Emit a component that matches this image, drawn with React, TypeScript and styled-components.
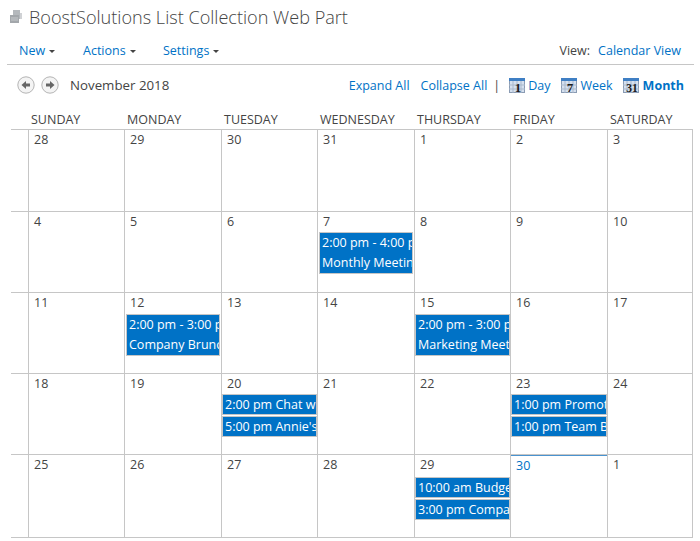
import React from "react";
import styled, { createGlobalStyle } from "styled-components";

const Global = createGlobalStyle`
  html, body { margin: 0; padding: 0; background: #fff; }
  body { font-family: "Open Sans", "Noto Sans", sans-serif; color: #444; }
`;

const Page = styled.div`
  width: 700px;
  height: 541px;
  overflow: hidden;
  display: flex;
  flex-direction: column;
`;

const TitleBar = styled.div`
  height: 35px;
  box-sizing: border-box;
  padding: 0 0 2px 8px;
  display: flex;
  align-items: center;
  gap: 5px;
`;

const Title = styled.h1`
  margin: 0;
  font-size: 18.1px;
  font-weight: 300;
  color: #444;
  white-space: nowrap;
`;

const Toolbar = styled.div`
  margin: 0 6px 0 7px;
  height: 30px;
  box-sizing: border-box;
  border-bottom: 1px solid #c6c6c6;
  padding: 1px 13px 0 12px;
  display: flex;
  align-items: center;
  font-size: 12.5px;
`;

const Menu = styled.a<{ $width: number }>`
  width: ${(p) => p.$width}px;
  display: flex;
  align-items: center;
  gap: 4px;
  color: #0072c6;
`;

const Caret = styled.span`
  width: 0;
  height: 0;
  margin-top: 2px;
  border-left: 3px solid transparent;
  border-right: 3px solid transparent;
  border-top: 3px solid #444;
`;

const ViewLabel = styled.span`
  margin-left: auto;
  margin-right: 8px;
`;

const Link = styled.a<{ $bold?: boolean; $gap?: number }>`
  color: #0072c6;
  white-space: nowrap;
  font-weight: ${(p) => (p.$bold ? 700 : 400)};
  margin-left: ${(p) => p.$gap ?? 0}px;
`;

const NavRow = styled.div`
  height: 40px;
  padding: 0 16px 0 17px;
  display: flex;
  align-items: center;
  font-size: 12.5px;
`;

const RoundButton = styled.span`
  width: 18px;
  height: 18px;
  margin-right: 6px;
  display: flex;
  align-items: center;
  justify-content: center;
`;

const Month = styled.span`
  margin-left: 5px;
  font-size: 13.3px;
  color: #444;
`;

const ViewLinks = styled.div`
  margin-left: auto;
  display: flex;
  align-items: center;
`;

const Sep = styled.span`
  margin: 0 9px 0 6px;
  color: #444;
`;

const ScopeItem = styled.div<{ $gap: number; $space: number }>`
  display: flex;
  align-items: center;
  gap: ${(p) => p.$gap}px;
  margin-left: ${(p) => p.$space}px;
`;

const Calendar = styled.div`
  margin-left: 11px;
  width: 682px;
  display: grid;
  grid-template-columns: 17px 96px 97px 96px 97px 96px 97px 86px;
`;

const HeadCell = styled.div`
  height: 25px;
  box-sizing: border-box;
  padding: 6px 0 0 3px;
  font-size: 12.5px;
  color: #444;
  white-space: nowrap;
  border-bottom: 1px solid #c6c6c6;
`;

const Gutter = styled.div`
  border-bottom: 1px solid #c6c6c6;
`;

const Cell = styled.div<{ $height: number; $last?: boolean }>`
  height: ${(p) => p.$height}px;
  box-sizing: border-box;
  min-width: 0;
  border-left: 1px solid #c6c6c6;
  border-right: ${(p) => (p.$last ? "1px solid #c6c6c6" : "none")};
  border-bottom: 1px solid #c6c6c6;
  display: flex;
  flex-direction: column;
`;

const DayNumber = styled.div<{ $today?: boolean; $height: number }>`
  height: ${(p) => p.$height}px;
  box-sizing: border-box;
  padding: 1px 0 0 5px;
  font-size: 12.5px;
  color: ${(p) => (p.$today ? "#0072c6" : "#444")};
  border-top: ${(p) => (p.$today ? "1px solid #4a93cf" : "none")};
`;

const EventList = styled.div`
  display: flex;
  flex-direction: column;
  gap: 1px;
`;

const EventBox = styled.div<{ $inset?: boolean }>`
  box-sizing: border-box;
  margin: 0 ${(p) => (p.$inset ? 1 : 0)}px;
  border: 1px solid #c6c6c6;
  background: #0072c6;
  color: #fff;
  font-size: 12.5px;
  padding-left: 2px;
  white-space: nowrap;
  overflow: hidden;
`;

const EventLine = styled.div<{ $height: number }>`
  height: ${(p) => p.$height}px;
  line-height: ${(p) => p.$height}px;
`;

const ArrowButton = ({ left }: { left?: boolean }) => (
  <RoundButton>
    <svg width="18" height="18" viewBox="0 0 18 18">
      <circle cx="9" cy="9" r="8.2" fill="#f4f4f4" stroke="#b4b4b4" />
      <path
        d={left ? "M4.5 9 9 5v2.6h4v2.8H9V13z" : "M13.5 9 9 5v2.6H5v2.8h4V13z"}
        fill="#666"
      />
    </svg>
  </RoundButton>
);

const CalIcon = ({ label }: { label: string }) => (
  <svg width="16" height="15" viewBox="0 0 16 15">
    <rect x="0.5" y="0.5" width="15" height="14" fill="#d5e0ef" stroke="#8a9bb3" />
    <rect x="0" y="0" width="16" height="3" fill="#3f7fc4" />
    <path d="M0 7h16M0 11h16M4 3v12M8 3v12M12 3v12" stroke="#a9b8cc" strokeWidth="1" />
    <text
      x="9"
      y="14"
      textAnchor="middle"
      fontFamily="Liberation Serif, serif"
      fontWeight="700"
      fontSize={label.length > 1 ? 11.5 : 13}
      fill="#1c1c1c"
    >
      {label}
    </text>
  </svg>
);

const TitleIcon = () => (
  <svg width="16" height="16" viewBox="0 0 16 16">
    <rect x="5" y="1" width="7" height="9" fill="#b4b8bc" />
    <rect x="2" y="6" width="9" height="8" fill="#a3a7ab" />
    <rect x="12" y="4" width="2" height="6" fill="#d0d2d5" />
    <path d="M3 9h7M3 11h7" stroke="#c6c9cc" />
  </svg>
);

const weekDays = ["SUNDAY", "MONDAY", "TUESDAY", "WEDNESDAY", "THURSDAY", "FRIDAY", "SATURDAY"];

type Day = { n: number; today?: boolean; flush?: boolean; events?: string[][] };

const weeks: { height: number; numberHeight: number; days: Day[] }[] = [
  {
    height: 82,
    numberHeight: 21,
    days: [{ n: 28 }, { n: 29 }, { n: 30 }, { n: 31 }, { n: 1 }, { n: 2 }, { n: 3 }],
  },
  {
    height: 81,
    numberHeight: 20,
    days: [
      { n: 4 },
      { n: 5 },
      { n: 6 },
      { n: 7, events: [["2:00 pm - 4:00 pm", "Monthly Meeting"]] },
      { n: 8 },
      { n: 9 },
      { n: 10 },
    ],
  },
  {
    height: 81,
    numberHeight: 21,
    days: [
      { n: 11 },
      { n: 12, events: [["2:00 pm - 3:00 pm", "Company Brunch"]] },
      { n: 13 },
      { n: 14 },
      { n: 15, flush: true, events: [["2:00 pm - 3:00 pm", "Marketing Meeting"]] },
      { n: 16 },
      { n: 17 },
    ],
  },
  {
    height: 81,
    numberHeight: 20,
    days: [
      { n: 18 },
      { n: 19 },
      { n: 20, events: [["2:00 pm Chat with"], ["5:00 pm Annie's"]] },
      { n: 21 },
      { n: 22 },
      { n: 23, events: [["1:00 pm Promotion"], ["1:00 pm Team Building"]] },
      { n: 24 },
    ],
  },
  {
    height: 83,
    numberHeight: 22,
    days: [
      { n: 25 },
      { n: 26 },
      { n: 27 },
      { n: 28 },
      { n: 29, events: [["10:00 am Budget"], ["3:00 pm Company"]] },
      { n: 30, today: true },
      { n: 1 },
    ],
  },
];

export default function App() {
  return (
    <Page>
      <Global />
      <TitleBar>
        <TitleIcon />
        <Title>BoostSolutions List Collection Web Part</Title>
      </TitleBar>
      <Toolbar>
        <Menu $width={64}>New <Caret /></Menu>
        <Menu $width={80}>Actions <Caret /></Menu>
        <Menu $width={70}>Settings <Caret /></Menu>
        <ViewLabel>View:</ViewLabel>
        <Link>Calendar View</Link>
      </Toolbar>
      <NavRow>
        <ArrowButton left />
        <ArrowButton />
        <Month>November 2018</Month>
        <ViewLinks>
          <Link>Expand All</Link>
          <Link $gap={11}>Collapse All</Link>
          <Sep>|</Sep>
          <ScopeItem $gap={3} $space={0}><CalIcon label="1" /><Link>Day</Link></ScopeItem>
          <ScopeItem $gap={3} $space={11}><CalIcon label="7" /><Link>Week</Link></ScopeItem>
          <ScopeItem $gap={4} $space={10}><CalIcon label="31" /><Link $bold>Month</Link></ScopeItem>
        </ViewLinks>
      </NavRow>
      <Calendar>
        <Gutter />
        {weekDays.map((d) => (
          <HeadCell key={d}>{d}</HeadCell>
        ))}
        {weeks.map((week, w) => (
          <React.Fragment key={w}>
            <Gutter />
            {week.days.map((day, i) => (
              <Cell key={i} $height={week.height} $last={i === 6}>
                <DayNumber $today={day.today} $height={week.numberHeight}>{day.n}</DayNumber>
                {day.events && (
                  <EventList>
                    {day.events.map((ev, k) => (
                      <EventBox key={k} $inset={ev.length > 1 && !day.flush}>
                        {ev.map((line) => (
                          <EventLine key={line} $height={ev.length > 1 ? 20 : 19}>{line}</EventLine>
                        ))}
                      </EventBox>
                    ))}
                  </EventList>
                )}
              </Cell>
            ))}
          </React.Fragment>
        ))}
      </Calendar>
    </Page>
  );
}
